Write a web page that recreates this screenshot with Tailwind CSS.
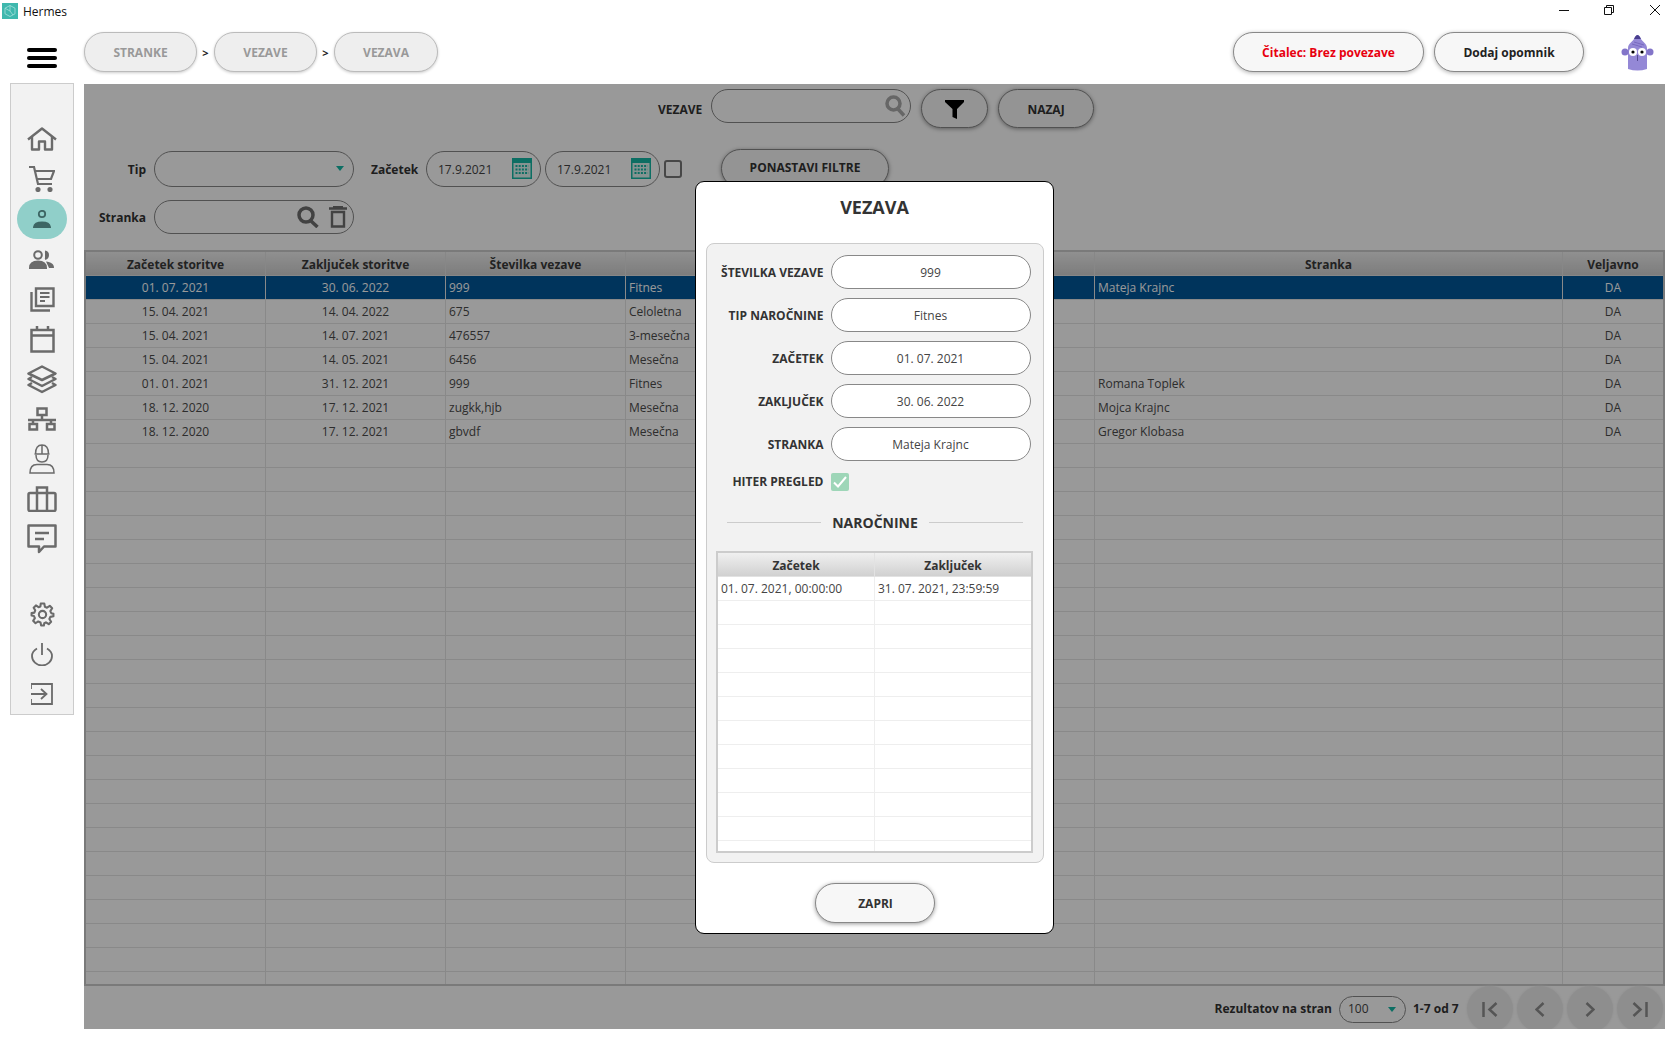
<!DOCTYPE html>
<html lang="en">
<head>
  <meta charset="UTF-8">
  <title>Hermes</title>
  <script src="https://cdn.jsdelivr.net/npm/@tailwindcss/browser@4"></script>
</head>
<body class="bg-white">
<div class="w-[1680px] h-[1045px] overflow-hidden bg-white font-['Open_Sans',sans-serif] text-[12px] text-[#333]">
<div class="w-[1665px] h-[1029px] flex flex-col">

  <!-- title bar -->
  <div class="h-[28px] flex items-center shrink-0">
    <svg class="ml-[2px] mt-[-6px]" width="16" height="16" viewBox="0 0 16 16"><rect width="16" height="16" fill="#3fb8ae"/><path d="M8 2.500 13 5.200V10.800L8 13.500 3 10.800V5.200ZM8 2.500V8M3 5.200 8 8 11 12" fill="none" stroke="#a6e0db" stroke-width=".8"/></svg>
    <span class="ml-[5px] mt-[-4px] text-[12px] text-[#111]">Hermes</span>
    <div class="ml-auto flex items-center mt-[-8px]">
      <svg width="12" height="12" viewBox="0 0 12 12"><path d="M1 6.500H11" stroke="#111" stroke-width="1"/></svg>
      <svg class="ml-[33px]" width="12" height="12" viewBox="0 0 12 12"><path d="M1.500 3.500H8.500V10.500H1.500ZM3.500 3.500V1.500H10.500V8.500H8.500" fill="none" stroke="#111"/></svg>
      <svg class="ml-[34px] mr-[4px]" width="12" height="12" viewBox="0 0 12 12"><path d="M1 1 11 11M11 1 1 11" stroke="#111"/></svg>
    </div>
  </div>

  <!-- header -->
  <div class="h-[56px] shrink-0 flex items-start pt-[4px] relative">
    <div class="w-[84px] shrink-0 flex flex-col gap-[4px] pl-[27px] pt-[16px]">
      <div class="w-[30px] h-[4px] rounded-full bg-black"></div>
      <div class="w-[30px] h-[4px] rounded-full bg-black"></div>
      <div class="w-[30px] h-[4px] rounded-full bg-black"></div>
    </div>
    <div class="w-[113px] h-[40px] pt-[2px] rounded-full border-[1.5px] border-[#bbb] bg-[#eee] flex items-center justify-center font-bold text-[#999] shadow-[0_1px_3px_rgba(0,0,0,.2)]">STRANKE</div>
    <span class="w-[17px] h-[40px] pt-[2px] flex items-center justify-center font-bold text-[11px] text-[#222]">&gt;</span>
    <div class="w-[103px] h-[40px] pt-[2px] rounded-full border-[1.5px] border-[#bbb] bg-[#eee] flex items-center justify-center font-bold text-[#999] shadow-[0_1px_3px_rgba(0,0,0,.2)]">VEZAVE</div>
    <span class="w-[17px] h-[40px] pt-[2px] flex items-center justify-center font-bold text-[11px] text-[#222]">&gt;</span>
    <div class="w-[104px] h-[40px] pt-[2px] rounded-full border-[1.5px] border-[#bbb] bg-[#eee] flex items-center justify-center font-bold text-[#999] shadow-[0_1px_3px_rgba(0,0,0,.2)]">VEZAVA</div>

    <div class="ml-auto w-[191px] h-[40px] pt-[2px] rounded-full border-[1.5px] border-[#888] bg-[#f7f7f7] flex items-center justify-center font-bold text-[#e8000f] shadow-[0_1px_4px_rgba(0,0,0,.3)]">Čitalec: Brez povezave</div>
    <div class="ml-[10px] w-[150px] h-[40px] pt-[2px] rounded-full border-[1.5px] border-[#888] bg-[#f7f7f7] flex items-center justify-center font-bold text-[#222] shadow-[0_1px_4px_rgba(0,0,0,.3)]">Dodaj opomnik</div>
    <svg class="ml-[37px] mr-[11px] mt-[1px]" width="33" height="39" viewBox="0 0 33 39">
      <path d="M7 15C7 10 13 8 14 4Q16.500 0 19 4C20 8 26 10 26 15V36Q16.500 39 7 36Z" fill="#9488d6"/>
      <path d="M14 4Q16.500 0 19 4L20 6H13Z" fill="#4a3f8e"/>
      <path d="M11 11 21 14M13 9 23 12" stroke="#6a5cb5" stroke-width=".7"/>
      <circle cx="4" cy="19" r="3.500" fill="#8375c9"/><circle cx="29" cy="19" r="3.500" fill="#8375c9"/>
      <circle cx="12" cy="19" r="4" fill="#fff"/><circle cx="21" cy="19" r="4" fill="#fff"/>
      <circle cx="12" cy="19" r="1.600" fill="#000"/><circle cx="21" cy="19" r="1.600" fill="#000"/>
      <path d="M16.500 22V28" stroke="#3a3170" stroke-width=".7"/>
    </svg>
  </div>

  <!-- body -->
  <div class="flex flex-1 min-h-0">
    <div class="w-[84px] shrink-0 pl-[10px]">
      <nav class="-mt-px w-[64px] h-[632px] border border-[#ccc] bg-[#f2f2f2] pt-[35px] flex flex-col items-center text-[#6b6b6b]">
        <div class="h-[40px] flex items-center justify-center">
          <svg width="30" height="24" viewBox="0 0 30 24" fill="none" stroke="currentColor" stroke-width="2.400" stroke-linejoin="round"><path d="M1 12.500 15 1.500 29 12.500"/><path d="M5 10V22.500H12V14.500H18V22.500H25V10"/></svg>
        </div>
        <div class="h-[40px] flex items-center justify-center">
          <svg width="26" height="26" viewBox="0 0 26 26" fill="none" stroke="currentColor" stroke-width="2.200"><path d="M0 1H5L9 18H23"/><path d="M6 5H25L22 13H8"/><circle cx="9" cy="23.500" r="1.500" fill="currentColor"/><circle cx="21" cy="23.500" r="1.500" fill="currentColor"/></svg>
        </div>
        <div class="w-[50px] h-[40px] rounded-full bg-[#90cfc9] flex items-center justify-center text-[#3d6664]">
          <svg width="18" height="18" viewBox="0 0 18 18" fill="none" stroke="currentColor" stroke-width="1.800"><circle cx="9" cy="4" r="3.200"/><path d="M1 17C1.500 13.500 5 12.500 9 12.500S16.500 13.500 17 17Z" fill="currentColor"/></svg>
        </div>
        <div class="h-[40px] flex items-center justify-center">
          <svg width="26" height="19" viewBox="0 0 26 19" fill="none" stroke="currentColor" stroke-width="2"><circle cx="9" cy="5" r="3.800"/><path d="M16 1.500C20 2 20 8 16 9" fill="currentColor"/><path d="M1 18C1 13 5 11.500 9 11.500S17 13 17 18Z" fill="currentColor"/><path d="M17 11.500C22 12 25 14 25 18H20" fill="currentColor" stroke="none"/></svg>
        </div>
        <div class="h-[40px] flex items-center justify-center">
          <svg width="25" height="25" viewBox="0 0 25 25" fill="none" stroke="currentColor" stroke-width="2.400"><path d="M6 1.500H23.500V19H6Z"/><path d="M1.500 5V23.500H20"/><path d="M10 6H19.500M10 10H19.500M10 14H15" stroke-width="2.200"/></svg>
        </div>
        <div class="h-[40px] flex items-center justify-center">
          <svg width="25" height="27" viewBox="0 0 25 27" fill="none" stroke="currentColor" stroke-width="2.500"><path d="M1.500 4H23.500V25.500H1.500ZM1.500 9.500H23.500M7 0V4M18 0V4"/></svg>
        </div>
        <div class="h-[40px] flex items-center justify-center">
          <svg width="30" height="29" viewBox="0 0 30 29" fill="none" stroke="currentColor" stroke-width="2.500" stroke-linejoin="round"><path d="M15 1.500 28.500 8.500 15 15 1.500 8.500Z"/><path d="M5 12 1.500 14 15 21 28.500 14 25 12"/><path d="M5 18 1.500 20 15 27 28.500 20 25 18"/></svg>
        </div>
        <div class="h-[40px] flex items-center justify-center">
          <svg width="30" height="24" viewBox="0 0 30 24" fill="none" stroke="currentColor" stroke-width="2.500"><path d="M10.500 1.500H19.500V8H10.500ZM15 8V13M1 13H29"/><path d="M2.500 17H10V22.500H2.500ZM20 17H27.500V22.500H20ZM6 13V17M24 13V17"/></svg>
        </div>
        <div class="h-[40px] flex items-center justify-center">
          <svg width="26" height="30" viewBox="0 0 26 30" fill="none" stroke="currentColor" stroke-width="1.500"><path d="M6.500 10C6.500 4 9 1 13 1S19.500 4 19.500 10M5.500 10H20.500M13 1V10M7 11C7 15 9 18 13 18S19 15 19 11"/><path d="M1 29C1 23 4 20.500 8 20.500H18C22 20.500 25 23 25 29Z"/></svg>
        </div>
        <div class="h-[40px] flex items-center justify-center">
          <svg width="30" height="26" viewBox="0 0 30 26" fill="none" stroke="currentColor" stroke-width="2.500"><rect x="1.500" y="7" width="27" height="18" rx="1.500"/><path d="M10 7V1.500H20V7M10 7V25M20 7V25"/></svg>
        </div>
        <div class="h-[40px] flex items-center justify-center">
          <svg width="30" height="30" viewBox="0 0 30 30" fill="none" stroke="currentColor" stroke-width="2.500"><path d="M1.500 1.500H28.500V22.500H17L12 28V22.500H1.500Z" stroke-linejoin="round"/><path d="M8 9H22M8 15H17"/></svg>
        </div>
        <div class="h-[35px]"></div>
        <div class="h-[40px] flex items-center justify-center">
          <svg width="25" height="25" viewBox="0 0 24 24" fill="none" stroke="currentColor" stroke-width="2" stroke-linejoin="round"><circle cx="12" cy="12" r="3.500"/><path d="M10.300 1.500H13.700L14.300 4.600 16.300 5.500 19 3.700 21.300 6 19.500 8.700 20.400 10.700 22.500 11.300V13.700L19.500 14.300 18.600 16.300 20.300 19 18 21.300 15.300 19.500 13.700 20.400 13.300 22.500H10.700L10.100 19.700 7.900 18.700 5.300 20.400 3 18.100 4.700 15.500 3.800 13.500 1.500 13V10.700L4.200 10.200 5 8 3.500 5.500 5.700 3.300 8.200 5 10 4.300Z"/></svg>
        </div>
        <div class="h-[40px] flex items-center justify-center">
          <svg width="22" height="23" viewBox="0 0 22 23" fill="none" stroke="currentColor" stroke-width="1.800"><path d="M6 5.500C3 7.300 1 9.800 1 13A10 9.500 0 0 0 21 13C21 9.800 19 7.300 16 5.500M11 0V12"/></svg>
        </div>
        <div class="h-[40px] flex items-center justify-center">
          <svg width="22" height="22" viewBox="0 0 22 22" fill="none" stroke="currentColor" stroke-width="1.800"><path d="M0 1H21V21H0M0 1V6M0 16V21"/><path d="M0 11H15M10 6 15.500 11 10 16"/></svg>
        </div>
      </nav>
    </div>

    <!-- main -->
    <main class="relative flex-1 min-w-0 overflow-hidden flex flex-col">
      <div class="flex items-start pt-[5px] pl-[574px]">
        <span class="w-[45px] h-[39px] pt-[12px] font-bold text-[#333] whitespace-nowrap">VEZAVE</span>
        <div class="ml-[8px] w-[200px] h-[34px] rounded-full border-[1.5px] border-[#888] bg-white flex items-center justify-end pr-[4px]">
          <svg width="21" height="22" viewBox="0 0 21 22" fill="none" stroke="#aaa" stroke-width="3.500"><circle cx="8.500" cy="8.500" r="6.500"/><path d="M13 14 19 20.500"/></svg>
        </div>
        <div class="ml-[10px] w-[67px] h-[39px] pt-[2px] rounded-full border-[1.5px] border-[#888] bg-[#f7f7f7] flex items-center justify-center shadow-[0_1px_4px_rgba(0,0,0,.4)]">
          <svg width="19" height="19" viewBox="0 0 19 19"><path d="M0 0H19V2L12 9V19L7.500 17V9L0 2Z" fill="#000"/></svg>
        </div>
        <div class="ml-[10px] w-[96px] h-[39px] pt-[2px] rounded-full border-[1.5px] border-[#888] bg-[#f7f7f7] flex items-center justify-center font-bold text-[#333] shadow-[0_1px_4px_rgba(0,0,0,.4)]">NAZAJ</div>
      </div>

      <div class="mt-[21px] h-[39px] flex items-center">
        <span class="w-[62px] pt-[2px] text-right font-bold">Tip</span>
        <div class="ml-[8px] w-[200px] h-[36px] rounded-full border-[1.5px] border-[#888] bg-white flex items-center justify-end pr-[9px]">
          <div class="w-0 h-0 border-x-[4px] border-x-transparent border-t-[5px] border-t-[#14b8a6]"></div>
        </div>
        <span class="ml-[17px] w-[47px] pt-[2px] text-right font-bold">Začetek</span>
        <div class="ml-[8px] w-[115px] h-[36px] rounded-full border-[1.5px] border-[#888] bg-white flex items-center pl-[11px] pr-[8px] justify-between text-[#444]">
          <span class="pt-[2px]">17.9.2021</span>
          <svg width="20" height="21" viewBox="0 0 20 21"><rect width="20" height="21" fill="#14b8a6"/><rect x="1.500" y="5" width="17" height="14.500" fill="#dff5f2"/><path d="M3.500 8H16.500M3.500 11.500H16.500M3.500 15H16.500" stroke="#14b8a6" stroke-width="2" stroke-dasharray="2 1.200"/></svg>
        </div>
        <div class="ml-[4px] w-[115px] h-[36px] rounded-full border-[1.5px] border-[#888] bg-white flex items-center pl-[11px] pr-[8px] justify-between text-[#444]">
          <span class="pt-[2px]">17.9.2021</span>
          <svg width="20" height="21" viewBox="0 0 20 21"><rect width="20" height="21" fill="#14b8a6"/><rect x="1.500" y="5" width="17" height="14.500" fill="#dff5f2"/><path d="M3.500 8H16.500M3.500 11.500H16.500M3.500 15H16.500" stroke="#14b8a6" stroke-width="2" stroke-dasharray="2 1.200"/></svg>
        </div>
        <div class="ml-[4px] w-[18px] h-[18px] rounded-[3px] border-2 border-[#777] bg-white"></div>
        <div class="ml-[39px] w-[168px] h-[39px] pb-[2px] rounded-full border-[1.5px] border-[#888] bg-[#f7f7f7] flex items-center justify-center font-bold text-[#333] shadow-[0_1px_4px_rgba(0,0,0,.4)]">PONASTAVI FILTRE</div>
      </div>

      <div class="mt-[12px] h-[34px] flex items-center">
        <span class="w-[62px] pt-[2px] text-right font-bold">Stranka</span>
        <div class="ml-[8px] w-[200px] h-[34px] rounded-full border-[1.5px] border-[#888] bg-white flex items-center justify-end pr-[6px] gap-[10px]">
          <svg width="22" height="22" viewBox="0 0 22 22" fill="none" stroke="#6e6e6e" stroke-width="3.500"><circle cx="9" cy="9" r="7"/><path d="M14 15 20.500 21"/></svg>
          <svg width="18" height="22" viewBox="0 0 18 22" fill="none" stroke="#6e6e6e" stroke-width="2.400"><path d="M0 2.500H18M4 1H14"/><path d="M3 6H15V20.500H3Z"/></svg>
        </div>
      </div>

      <div class="mt-[16px] h-[736px] border-2 border-[#ccc] overflow-hidden shrink-0">
        <table class="table-fixed border-separate border-spacing-0 w-[1577px]">
          <colgroup><col class="w-[180px]"><col class="w-[180px]"><col class="w-[180px]"><col class="w-[469px]"><col class="w-[468px]"><col class="w-[100px]"></colgroup>
          <thead>
            <tr class="bg-linear-to-b from-[#f0f0f0] to-[#cfcfcf] text-[12px] text-[#3a3a3a]">
              <th class="h-[24px] p-0 pt-[2px] font-bold border-r border-b border-[#e2e2e2]">Začetek storitve</th>
              <th class="h-[24px] p-0 pt-[2px] font-bold border-r border-b border-[#e2e2e2]">Zaključek storitve</th>
              <th class="h-[24px] p-0 pt-[2px] font-bold border-r border-b border-[#e2e2e2]">Številka vezave</th>
              <th class="h-[24px] p-0 pt-[2px] font-bold border-r border-b border-[#e2e2e2]"></th>
              <th class="h-[24px] p-0 pt-[2px] font-bold border-r border-b border-[#e2e2e2]">Stranka</th>
              <th class="h-[24px] p-0 pt-[2px] font-bold border-b border-[#e2e2e2]">Veljavno</th>
            </tr>
          </thead>
          <tbody id="mainRows"></tbody>
        </table>
      </div>

      <div class="flex-1 flex items-center justify-end pr-[2px] gap-[4px]">
        <span class="font-bold text-[#333]">Rezultatov na stran</span>
        <div class="ml-[3px] w-[67px] h-[27px] rounded-full border-[1.5px] border-[#888] bg-white flex items-center justify-between pl-[8px] pr-[9px] text-[#444]">
          <span>100</span>
          <div class="w-0 h-0 border-x-[4px] border-x-transparent border-t-[5px] border-t-[#14b8a6]"></div>
        </div>
        <span class="ml-[3px] w-[46px] font-bold text-[#333] whitespace-nowrap">1-7 od 7</span>
        <div class="w-[46px] h-[46px] shrink-0 rounded-full bg-[#ededed] shadow-[0_0_3px_#ededed] flex items-center justify-center ml-[4px]">
          <svg width="16" height="15" viewBox="0 0 16 15" fill="none" stroke="#8e8e8e" stroke-width="2.500"><path d="M1.500 0V15M14.500 1 7.500 7.500 14.500 14"/></svg>
        </div>
        <div class="w-[46px] h-[46px] shrink-0 rounded-full bg-[#ededed] shadow-[0_0_3px_#ededed] flex items-center justify-center">
          <svg width="10" height="15" viewBox="0 0 10 15" fill="none" stroke="#8e8e8e" stroke-width="2.500"><path d="M8.500 1 1.500 7.500 8.500 14"/></svg>
        </div>
        <div class="w-[46px] h-[46px] shrink-0 rounded-full bg-[#ededed] shadow-[0_0_3px_#ededed] flex items-center justify-center">
          <svg width="10" height="15" viewBox="0 0 10 15" fill="none" stroke="#8e8e8e" stroke-width="2.500"><path d="M1.500 1 8.500 7.500 1.500 14"/></svg>
        </div>
        <div class="w-[46px] h-[46px] shrink-0 rounded-full bg-[#ededed] shadow-[0_0_3px_#ededed] flex items-center justify-center">
          <svg width="16" height="15" viewBox="0 0 16 15" fill="none" stroke="#8e8e8e" stroke-width="2.500"><path d="M14.500 0V15M1.500 1 8.500 7.500 1.500 14"/></svg>
        </div>
      </div>

      <!-- dim layer -->
      <div class="absolute inset-0 bg-black/40"></div>

      <!-- modal -->
      <div class="absolute left-[611px] top-[97px] w-[359px] h-[753px] bg-white border-[1.5px] border-black rounded-[9px] flex flex-col">
        <div class="h-[61px] shrink-0 pt-[12px] text-center text-[18px] font-bold text-[#333]">VEZAVA</div>
        <div class="mx-[9.500px] h-[620px] shrink-0 border-[1.5px] border-[#ccc] rounded-[8px] bg-[#f2f2f2] pt-[10.500px] flex flex-col">
          <div class="flex items-center h-[34px] mb-[9px]">
            <span class="w-[117px] pt-[2px] text-right font-bold">ŠTEVILKA VEZAVE</span>
            <div class="ml-[7px] w-[200px] h-[34px] pt-[2px] rounded-full border-[1.5px] border-[#888] bg-white flex items-center justify-center text-[#444]">999</div>
          </div>
          <div class="flex items-center h-[34px] mb-[9px]">
            <span class="w-[117px] pt-[2px] text-right font-bold">TIP NAROČNINE</span>
            <div class="ml-[7px] w-[200px] h-[34px] pt-[2px] rounded-full border-[1.5px] border-[#888] bg-white flex items-center justify-center text-[#444]">Fitnes</div>
          </div>
          <div class="flex items-center h-[34px] mb-[9px]">
            <span class="w-[117px] pt-[2px] text-right font-bold">ZAČETEK</span>
            <div class="ml-[7px] w-[200px] h-[34px] pt-[2px] rounded-full border-[1.5px] border-[#888] bg-white flex items-center justify-center text-[#444]">01. 07. 2021</div>
          </div>
          <div class="flex items-center h-[34px] mb-[9px]">
            <span class="w-[117px] pt-[2px] text-right font-bold">ZAKLJUČEK</span>
            <div class="ml-[7px] w-[200px] h-[34px] pt-[2px] rounded-full border-[1.5px] border-[#888] bg-white flex items-center justify-center text-[#444]">30. 06. 2022</div>
          </div>
          <div class="flex items-center h-[34px] mb-[12px]">
            <span class="w-[117px] pt-[2px] text-right font-bold">STRANKA</span>
            <div class="ml-[7px] w-[200px] h-[34px] pt-[2px] rounded-full border-[1.5px] border-[#888] bg-white flex items-center justify-center text-[#444]">Mateja Krajnc</div>
          </div>
          <div class="flex items-center h-[18px]">
            <span class="w-[117px] text-right font-bold">HITER PREGLED</span>
            <div class="ml-[7px] w-[18px] h-[18px] rounded-[2px] bg-[#9ed6b8] flex items-center justify-center">
              <svg width="14" height="12" viewBox="0 0 14 12" fill="none" stroke="#fff" stroke-width="2"><path d="M1 6.500 5 10.500 13 1"/></svg>
            </div>
          </div>
          <div class="mt-[22px] h-[20px] flex items-center pl-[20.500px] pr-[16px]">
            <div class="w-[94px] h-px bg-[#ccc]"></div>
            <span class="w-[108px] text-center font-bold text-[14px]">NAROČNINE</span>
            <div class="w-[94px] h-px bg-[#ccc]"></div>
          </div>
          <div class="mt-[18px] ml-[9.500px] w-[317px] h-[302px] border-2 border-[#ccc] overflow-hidden bg-white">
            <table class="table-fixed border-separate border-spacing-0 w-[313px]">
              <thead>
                <tr class="bg-linear-to-b from-[#f0f0f0] to-[#cfcfcf] text-[12px]">
                  <th class="h-[24px] w-[157px] p-0 pt-[3px] font-bold border-r border-b border-[#e2e2e2]">Začetek</th>
                  <th class="h-[24px] p-0 pt-[3px] font-bold border-b border-[#e2e2e2]">Zaključek</th>
                </tr>
              </thead>
              <tbody id="subRows"></tbody>
            </table>
          </div>
        </div>
        <div class="mt-[20px] ml-[119px] w-[120px] h-[40px] pt-[2px] pl-[1px] rounded-full border-[1.5px] border-[#888] bg-[#f7f7f7] flex items-center justify-center font-bold text-[#333] shadow-[0_1px_4px_rgba(0,0,0,.4)]">ZAPRI</div>
      </div>
    </main>
  </div>
</div>
</div>

<script>
const vezave = [
  ["01. 07. 2021", "30. 06. 2022", "999", "Fitnes", "Mateja Krajnc", "DA"],
  ["15. 04. 2021", "14. 04. 2022", "675", "Celoletna", "", "DA"],
  ["15. 04. 2021", "14. 07. 2021", "476557", "3-mesečna", "", "DA"],
  ["15. 04. 2021", "14. 05. 2021", "6456", "Mesečna", "", "DA"],
  ["01. 01. 2021", "31. 12. 2021", "999", "Fitnes", "Romana Toplek", "DA"],
  ["18. 12. 2020", "17. 12. 2021", "zugkk,hjb", "Mesečna", "Mojca Krajnc", "DA"],
  ["18. 12. 2020", "17. 12. 2021", "gbvdf", "Mesečna", "Gregor Klobasa", "DA"]
];

const mainBody = document.getElementById("mainRows");
for (let r = 0; r < 30; r++) {
  const row = vezave[r] || ["", "", "", "", "", ""];
  const tr = mainBody.insertRow();
  tr.className = r === 0 ? "bg-[#00579a] text-white" : "bg-white text-[#4b4b4b]";
  row.forEach((val, c) => {
    const td = tr.insertCell();
    const align = c < 2 || c === 5 ? "text-center" : "text-left pl-[3px]";
    td.className = "h-[24px] p-0 border-b border-[#e4e4e4] whitespace-nowrap overflow-hidden " + align;
    if (c < 5) td.classList.add("border-r");
    td.innerText = val;
  });
}

const subBody = document.getElementById("subRows");
for (let r = 0; r < 12; r++) {
  const tr = subBody.insertRow();
  ["01. 07. 2021, 00:00:00", "31. 07. 2021, 23:59:59"].forEach((val, c) => {
    const td = tr.insertCell();
    td.className = "h-[24px] p-0 pl-[3px] pt-[2px] border-b border-[#eee] text-[#444] whitespace-nowrap";
    if (c === 0) td.classList.add("border-r");
    td.innerText = r === 0 ? val : "";
  });
}
</script>
</body>
</html>
